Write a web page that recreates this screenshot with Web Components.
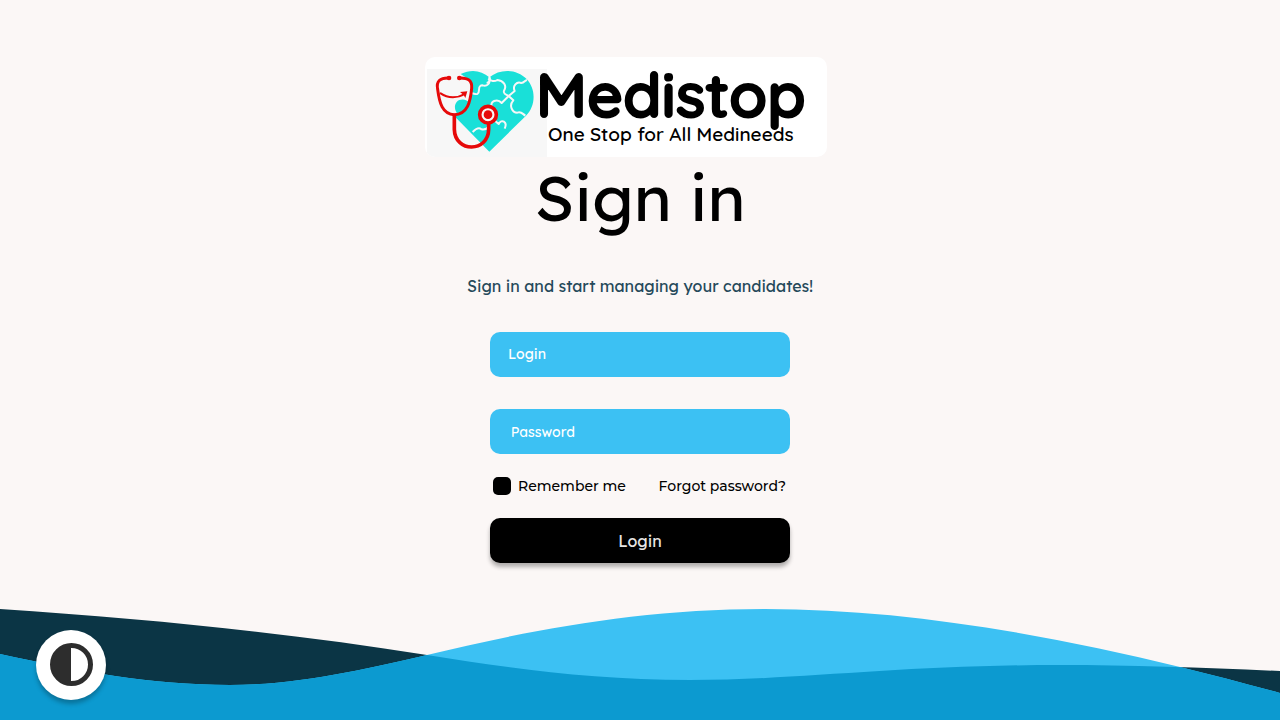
<!DOCTYPE html>
<html lang="en">
<head>
<meta charset="utf-8">
<title>Medistop – Sign in</title>
<style>
  body { margin: 0; background: #fbf7f6; font-family: Lexend, Inter, "Noto Sans", sans-serif; color: #000; }
</style>
</head>
<body>
<sign-in-page>
  <medi-logo slot="logo"></medi-logo>
  <span slot="title">Sign in</span>
  <span slot="lead">Sign in and start managing your candidates!</span>
  <login-form></login-form>
</sign-in-page>
<script>
const define = (name, html, setup) => customElements.define(name, class extends HTMLElement {
  constructor() {
    super();
    this.attachShadow({ mode: "open" }).innerHTML = html;
    if (setup) setup(this, this.shadowRoot);
  }
});

define("medi-logo", `
<style>
  :host { display: block; width: 402px; max-width: 100%; border-radius: 10px; overflow: hidden; background: #fff; }
  .logo { display: block; width: 100%; height: auto; }
  text { font-family: Quicksand, Inter, sans-serif; }
</style>
<svg class="logo" viewBox="0 0 402 100" role="img" aria-label="Medistop">
  <rect x="2" y="12" width="120" height="88" fill="#f7f7f7"/>
  <svg x="2" y="12" width="120" height="88" viewBox="21 57 360 264" fill="none">
    <path fill="#19e0d8" d="M208 82C185 62 155 56 122 72L152 92L156 124L148 160C142 147 120 145 110 156C102 166 104 178 110 188L105 200L208 305L318 197C347 168 349 118 320 87C290 56 240 55 208 82Z"/>
    <g stroke="#f7f7f7" stroke-width="6" stroke-linejoin="round">
      <path d="M208 80C213 91 206 98 200 99M205 86C212 94 224 95 232 90C250 92 262 106 252 122C248 130 258 134 266 138"/>
      <path d="M208 82C212 102 200 110 188 106C170 106 182 126 173 131C168 135 162 130 156 130"/>
      <path d="M266 138L284 123C277 108 290 93 304 99C314 98 312 92 321 90"/>
      <path d="M266 138L245 159C232 144 207 154 216 172C216 180 208 178 203 184"/>
      <path d="M266 138L280 151C266 166 276 188 292 188C304 184 306 190 316 197"/>
      <path d="M222 210L236 222C244 206 264 214 254 236M158 246C170 234 178 232 184 238C196 240 202 236 206 230"/>
    </g>
    <g stroke="#e60a0a" stroke-linecap="round">
      <path stroke-width="9" d="M87 84C60 83 48 94 53 118C58 158 67 193 103 194C143 193 151 155 155 115C157 92 145 83 118 84"/>
      <path stroke-width="11" d="M103 197V238C105 309 205 308 206 238V222"/>
      <path stroke-width="6" d="M62 130C84 146 114 144 134 132"/>
      <circle cx="204" cy="194" r="25" stroke-width="11" fill="#f7f7f7"/>
    </g>
    <g fill="#e60a0a"><circle cx="87" cy="84" r="7"/><circle cx="118" cy="84" r="7"/><circle cx="204" cy="194" r="13"/><path d="M120 126L142 124L136 144L131 135Z"/></g>
  </svg>
  <text x="111" y="60" font-size="62" font-weight="600" stroke="#000" stroke-width="2" stroke-linejoin="round">Medistop</text>
  <text x="123" y="84" font-size="19" font-weight="600">One Stop for All Medineeds</text>
</svg>`);

define("text-field", `
<style>
  :host { display: block; }
  input { box-sizing: border-box; display: block; width: 100%; height: 45px; margin: 0; padding: 0 21px; border: 0; border-radius: 10px; background: #3cc1f3; color: #fff; font: 600 14px Quicksand, Lexend, Inter, sans-serif; }
  input[type="text"] { padding: 0 18px 2px; font: 400 14px Lexend, Inter, sans-serif; }
  input::placeholder { color: #fff; opacity: 1; }
</style>
<input>`, (host, root) => {
  const input = root.querySelector("input");
  input.type = host.getAttribute("type") || "text";
  input.placeholder = host.getAttribute("label");
  input.setAttribute("aria-label", host.getAttribute("label"));
});

define("login-form", `
<style>
  :host { display: block; width: 300px; max-width: 100%; }
  form { display: flex; flex-direction: column; gap: 32px; }
  .actions { display: flex; flex-direction: column; gap: 20px; margin-top: -12px; }
  .options { display: flex; align-items: center; justify-content: space-between; height: 24px; padding: 0 4px 0 3px; font: 500 14px Montserrat, Inter, sans-serif; }
  label { display: flex; align-items: center; gap: 7px; }
  input { appearance: none; width: 18px; height: 18px; margin: 0; border-radius: 5px; background: #000; }
  input:checked { box-shadow: inset 0 0 0 5px #000; background: #3cc1f3; }
  a { color: inherit; text-decoration: none; }
  button { height: 45px; border: 0; border-radius: 10px; background: #000; color: #e8e6e5; font: 400 16px Lexend, Inter, sans-serif; box-shadow: 0 4px 4px rgba(0, 0, 0, .3); cursor: pointer; }
</style>
<form>
  <text-field label="Login"></text-field>
  <text-field label="Password" type="password"></text-field>
  <div class="actions">
    <div class="options">
      <label><input type="checkbox">Remember me</label>
      <a href="#forgot">Forgot password?</a>
    </div>
    <button type="submit">Login</button>
  </div>
</form>`);

define("contrast-toggle", `
<style>
  :host { display: block; }
  button { display: grid; place-items: center; width: 70px; height: 70px; padding: 0; border: 0; border-radius: 50%; background: #fff; box-shadow: 0 4px 4px rgba(0, 0, 0, .25); cursor: pointer; }
</style>
<button type="button" aria-label="Toggle contrast">
  <svg width="44" height="44" viewBox="0 0 44 44"><circle cx="22.5" cy="21.5" r="19" fill="none" stroke="#2d2d2d" stroke-width="5"/><path d="M22 3A19 19 0 0 0 22 41Z" fill="#2d2d2d"/></svg>
</button>`);

define("wave-footer", `
<style>
  :host { display: block; position: relative; }
  .waves { display: block; width: 100%; height: 111px; }
  contrast-toggle { position: absolute; left: 36px; bottom: 20px; }
</style>
<svg class="waves" viewBox="0 0 1280 111" preserveAspectRatio="none" aria-hidden="true">
  <defs>
    <path id="deep" d="M0 0C150 10 290 24 427 46C510 59 590 71 690 71C800 71 900 56 1060 56C1130 56 1210 59 1280 62V111H0Z"/>
    <path id="crest" d="M0 45C80 62 150 76 230 76C300 76 370 59 427 46C530 21 640 0 765 0C900 0 1040 24 1180 58C1213 66 1247 75 1280 84V111H0Z"/>
    <clipPath id="overlap"><use href="#crest"/></clipPath>
  </defs>
  <use href="#deep" fill="#0b3545"/>
  <use href="#crest" fill="#3cc1f3"/>
  <use href="#deep" fill="#0c9ad0" clip-path="url(#overlap)"/>
</svg>
<contrast-toggle></contrast-toggle>`);

define("sign-in-page", `
<style>
  :host { display: flex; flex-direction: column; min-height: 100vh; }
  main { display: flex; flex-direction: column; align-items: center; padding: 57px 16px 32px; }
  .brand { padding-right: 28px; }
  h1 { margin: 0; font-size: 64px; font-weight: 400; line-height: 80px; }
  p { margin: 37px 0 34px; color: #25495a; font-size: 16px; line-height: 24px; }
  wave-footer { margin-top: auto; }
</style>
<main>
  <div class="brand"><slot name="logo"></slot></div>
  <h1><slot name="title"></slot></h1>
  <p><slot name="lead"></slot></p>
  <slot></slot>
</main>
<wave-footer></wave-footer>`);
</script>
</body>
</html>
